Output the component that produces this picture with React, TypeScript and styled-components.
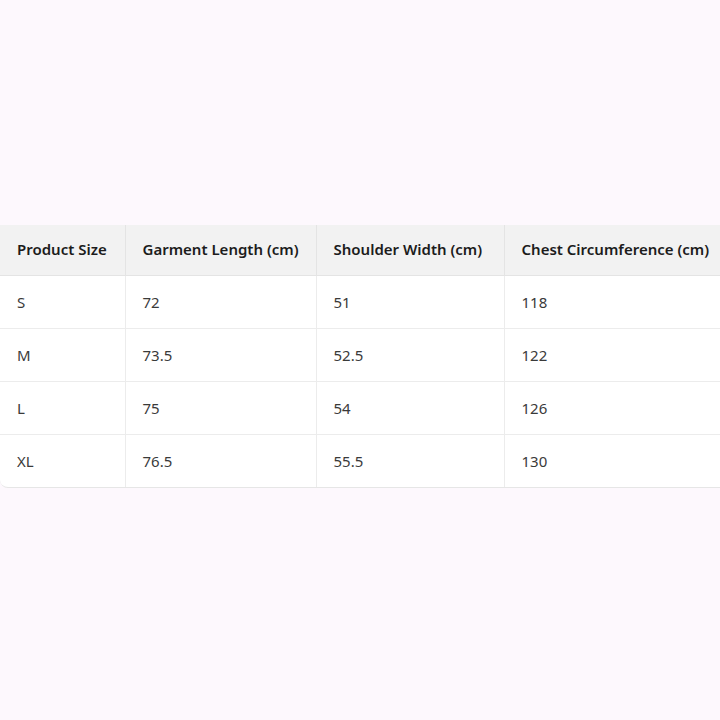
import React from "react";
import styled, { createGlobalStyle } from "styled-components";

const Global = createGlobalStyle`
  html, body { margin: 0; padding: 0; background: #fdf8fd; }
  body { font-family: "Noto Sans", "Open Sans", Arial, sans-serif; }
`;

const Page = styled.div`
  width: 720px;
  height: 720px;
  padding-top: 225px;
  box-sizing: border-box;
  overflow: hidden;
`;

const Wrapper = styled.div`
  width: 100%;
  overflow: hidden;
  background: #ffffff;
  border-bottom: 1px solid #e6e6e6;
  border-bottom-left-radius: 8px;
`;

const Table = styled.table`
  border-collapse: collapse;
  table-layout: fixed;
  width: 770px;
`;

const HeadCell = styled.th<{ $w: number }>`
  width: ${(p) => p.$w}px;
  height: 50px;
  padding: 0 0 1px 17px;
  box-sizing: border-box;
  text-align: left;
  font-size: 15px;
  font-weight: 600;
  color: #1c1c1c;
  background: #f2f2f2;
  border-bottom: 1px solid #e4e4e4;
  border-left: 1px solid #e4e4e4;
  white-space: nowrap;
  &:first-child { border-left: none; }
`;

const Row = styled.tr<{ $last?: boolean }>`
  border-bottom: ${(p) => (p.$last ? "none" : "1px solid #ececec")};
`;

const Cell = styled.td`
  height: 53px;
  padding: 1px 0 0 17px;
  box-sizing: border-box;
  font-size: 15px;
  color: #3a3a3a;
  border-left: 1px solid #ececec;
  white-space: nowrap;
  &:first-child { border-left: none; }
`;

const columns = [
  { label: "Product Size", w: 125 },
  { label: "Garment Length (cm)", w: 191 },
  { label: "Shoulder Width (cm)", w: 188 },
  { label: "Chest Circumference (cm)", w: 266 },
];

const rows = [
  ["S", "72", "51", "118"],
  ["M", "73.5", "52.5", "122"],
  ["L", "75", "54", "126"],
  ["XL", "76.5", "55.5", "130"],
];

export default function App() {
  return (
    <>
      <Global />
      <Page>
        <Wrapper>
          <Table>
            <thead>
              <tr>
                {columns.map((c) => (
                  <HeadCell key={c.label} $w={c.w}>
                    {c.label}
                  </HeadCell>
                ))}
              </tr>
            </thead>
            <tbody>
              {rows.map((r, i) => (
                <Row key={r[0]} $last={i === rows.length - 1}>
                  {r.map((v, j) => (
                    <Cell key={j}>{v}</Cell>
                  ))}
                </Row>
              ))}
            </tbody>
          </Table>
        </Wrapper>
      </Page>
    </>
  );
}
